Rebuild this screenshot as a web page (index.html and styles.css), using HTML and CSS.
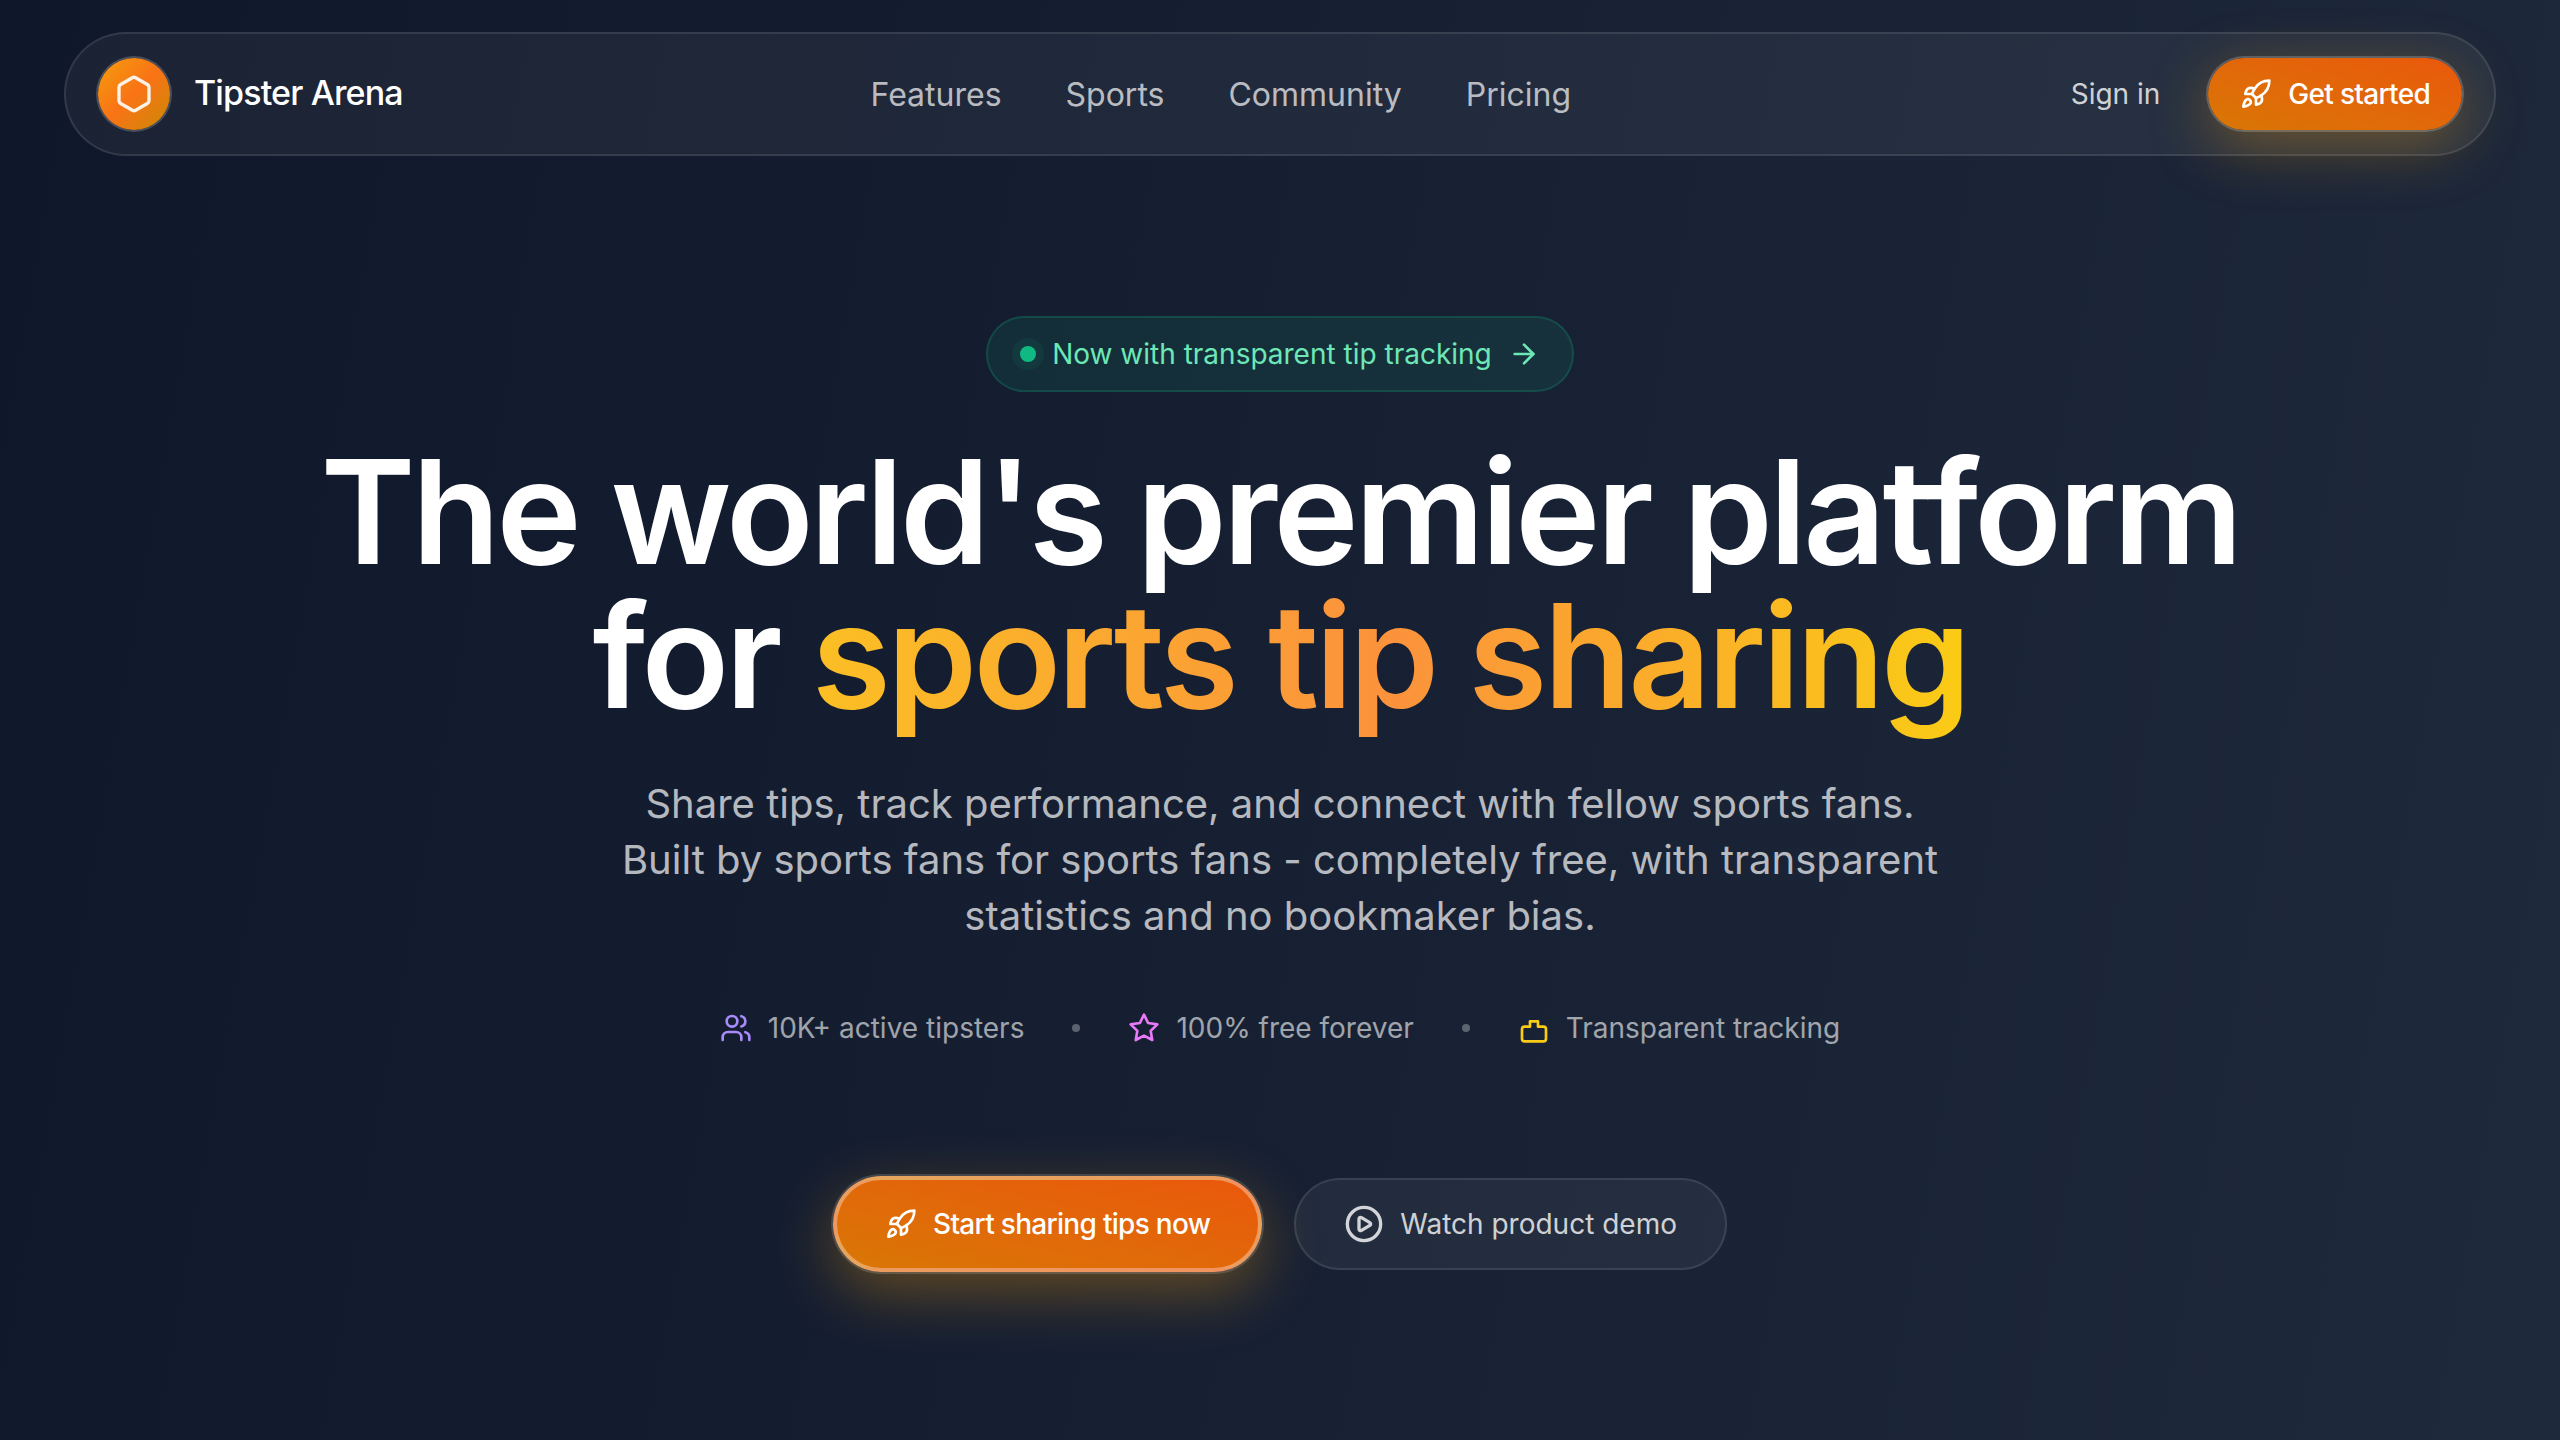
FILE: index.html
```html
<!DOCTYPE html>
<html lang="en">
<head>
<meta charset="utf-8">
<title>Tipster Arena</title>
<link rel="stylesheet" href="styles.css">
</head>
<body>
<svg class="sprite" aria-hidden="true">
  <symbol id="rocket" viewBox="0 0 24 24">
    <path d="M4.5 16.5c-1.5 1.26-2 5-2 5s3.74-.5 5-2c.71-.84.7-2.13-.09-2.91a2.18 2.18 0 0 0-2.91-.09z"/>
    <path d="m12 15-3-3a22 22 0 0 1 2-3.95A12.88 12.88 0 0 1 22 2c0 2.72-.78 7.5-6 11a22.35 22.35 0 0 1-4 2z"/>
    <path d="M9 12H4s.55-3.03 2-4c1.62-1.08 5 0 5 0"/>
    <path d="M12 15v5s3.03-.55 4-2c1.08-1.62 0-5 0-5"/>
  </symbol>
</svg>
<div class="page">
  <header class="nav">
    <a class="brand">
      <span class="brand-mark">
        <svg class="icon icon-lg" viewBox="0 0 24 24"><path d="M21 16V8a2 2 0 0 0-1-1.73l-7-4a2 2 0 0 0-2 0l-7 4A2 2 0 0 0 3 8v8a2 2 0 0 0 1 1.73l7 4a2 2 0 0 0 2 0l7-4A2 2 0 0 0 21 16z"/></svg>
      </span>
      <span class="brand-name">Tipster Arena</span>
    </a>
    <nav class="links">
      <a>Features</a>
      <a>Sports</a>
      <a>Community</a>
      <a>Pricing</a>
    </nav>
    <div class="actions">
      <a class="sign-in">Sign in</a>
      <a class="btn-start"><svg class="icon"><use href="#rocket"/></svg><span>Get started</span></a>
    </div>
  </header>
  <main class="hero">
    <a class="badge">
      <span class="pulse"></span>
      <span>Now with transparent tip tracking</span>
      <svg class="icon" viewBox="0 0 24 24"><path d="M5 12h14"/><path d="m12 5 7 7-7 7"/></svg>
    </a>
    <h1 class="title">The world's premier platform<br>for <span class="accent">sports tip sharing</span></h1>
    <p class="lead">Share tips, track performance, and connect with fellow sports fans. Built by sports fans for sports fans - completely free, with transparent statistics and no bookmaker bias.</p>
    <div class="stats">
      <div class="stat">
        <svg class="icon violet" viewBox="0 0 24 24"><path d="M16 21v-2a4 4 0 0 0-4-4H6a4 4 0 0 0-4 4v2"/><circle cx="9" cy="7" r="4"/><path d="M22 21v-2a4 4 0 0 0-3-3.87"/><path d="M16 3.13a4 4 0 0 1 0 7.75"/></svg>
        <span>10K+ active tipsters</span>
      </div>
      <span class="sep"></span>
      <div class="stat">
        <svg class="icon fuchsia" viewBox="0 0 24 24"><polygon points="12 2 15.09 8.26 22 9.27 17 14.14 18.18 21.02 12 17.77 5.82 21.02 7 14.14 2 9.27 8.91 8.26 12 2"/></svg>
        <span>100% free forever</span>
      </div>
      <span class="sep"></span>
      <div class="stat">
        <svg class="icon yellow" viewBox="0 0 24 24"><path d="M3 13a2 2 0 0 1 2-2h4V7h6v4h4a2 2 0 0 1 2 2v7a2 2 0 0 1-2 2H5a2 2 0 0 1-2-2z"/></svg>
        <span>Transparent tracking</span>
      </div>
    </div>
    <div class="cta">
      <a class="btn-primary"><svg class="icon"><use href="#rocket"/></svg><span>Start sharing tips now</span></a>
      <a class="btn-ghost"><svg class="icon icon-lg" viewBox="0 0 24 24"><path d="M9 9.003a1 1 0 0 1 1.517-.859l4.997 2.997a1 1 0 0 1 0 1.718l-4.997 2.997A1 1 0 0 1 9 14.996z"/><circle cx="12" cy="12" r="10"/></svg><span>Watch product demo</span></a>
    </div>
  </main>
</div>
</body>
</html>
```
FILE: styles.css
```css
* { box-sizing: border-box; }
body {
  margin: 0;
  font-family: Inter, "Liberation Sans", sans-serif;
  font-size: 28px;
  line-height: 40px;
  color: #fff;
  -webkit-font-smoothing: antialiased;
}
.sprite { display: none; }
.page {
  height: 1440px;
  padding: 32px 64px 0;
  overflow: hidden;
  background: linear-gradient(100deg, #0f172a, #1e293b);
}
.icon {
  width: 32px;
  height: 32px;
  flex: none;
  fill: none;
  stroke: currentColor;
  stroke-width: 2;
  stroke-linecap: round;
  stroke-linejoin: round;
}
.icon-lg { width: 40px; height: 40px; }

.nav {
  display: flex;
  align-items: center;
  justify-content: space-between;
  height: 124px;
  padding: 0 32px;
  border: 2px solid rgba(255, 255, 255, .1);
  border-radius: 62px;
  background: rgba(255, 255, 255, .05);
}
.brand { display: flex; align-items: center; gap: 24px; }
.brand-mark {
  display: flex;
  align-items: center;
  justify-content: center;
  width: 72px;
  height: 72px;
  border-radius: 50%;
  color: rgba(255, 255, 255, .9);
  background: linear-gradient(135deg, #f59e0b, #f97316 50%, #ca8a04);
  box-shadow: 0 0 0 2px rgba(255, 255, 255, .2);
}
.brand-name { padding-bottom: 2px; font-size: 34px; font-weight: 500; letter-spacing: -.025em; }
.links { display: flex; gap: 64px; padding-top: 2px; font-size: 32px; color: rgba(255, 255, 255, .7); }
.actions { display: flex; align-items: center; gap: 16px; }
.sign-in { padding: 16px 32px; color: rgba(255, 255, 255, .8); }
.btn-start {
  display: flex;
  align-items: center;
  gap: 16px;
  padding: 16px 32px;
  border-radius: 36px;
  font-weight: 500;
  letter-spacing: -.025em;
  background: linear-gradient(to top right, #d97706, #ea580c);
  box-shadow: 0 0 0 2px rgba(255, 255, 255, .2), 0 16px 60px rgba(245, 158, 11, .35);
}

.hero { display: flex; flex-direction: column; align-items: center; padding-top: 160px; }
.badge {
  display: flex;
  align-items: center;
  gap: 16px;
  padding: 16px 32px;
  border: 2px solid rgba(16, 185, 129, .2);
  border-radius: 38px;
  color: #6ee7b7;
  background: rgba(16, 185, 129, .11);
}
.pulse {
  width: 16px;
  height: 16px;
  border-radius: 50%;
  background: #10b981;
  box-shadow: 0 0 0 8px rgba(16, 185, 129, .08);
}
.title {
  margin: 48px 0 0;
  font-size: 144px;
  line-height: 144px;
  font-weight: 600;
  letter-spacing: -.025em;
  text-align: center;
  white-space: nowrap;
}
.accent {
  color: transparent;
  background: linear-gradient(to right, #fbbf24, #fb923c, #facc15);
  -webkit-background-clip: text;
  background-clip: text;
}
.lead {
  width: 1344px;
  margin: 48px 0 0;
  font-size: 40px;
  line-height: 56px;
  text-align: center;
  color: rgba(255, 255, 255, .7);
}
.stats {
  display: flex;
  align-items: center;
  gap: 48px;
  margin-top: 64px;
  color: rgba(255, 255, 255, .6);
}
.stat { display: flex; align-items: center; gap: 16px; }
.sep { width: 8px; height: 8px; border-radius: 50%; background: rgba(255, 255, 255, .3); }
.violet { color: #a78bfa; }
.fuchsia { color: #e879f9; }
.yellow { color: #facc15; }
.cta { display: flex; align-items: center; gap: 32px; margin-top: 128px; }
.btn-primary, .btn-ghost {
  display: flex;
  align-items: center;
  gap: 16px;
  padding: 24px 48px;
  border-radius: 48px;
}
.btn-primary {
  border: 4px solid rgba(255, 255, 255, .35);
  font-weight: 500;
  letter-spacing: -.025em;
  background: linear-gradient(to top right, #d97706, #ea580c);
  box-shadow: 0 0 0 2px rgba(255, 255, 255, .15), 0 20px 60px rgba(245, 158, 11, .35);
}
.btn-ghost {
  border: 2px solid rgba(255, 255, 255, .1);
  color: rgba(255, 255, 255, .8);
  background: rgba(255, 255, 255, .05);
}
```
